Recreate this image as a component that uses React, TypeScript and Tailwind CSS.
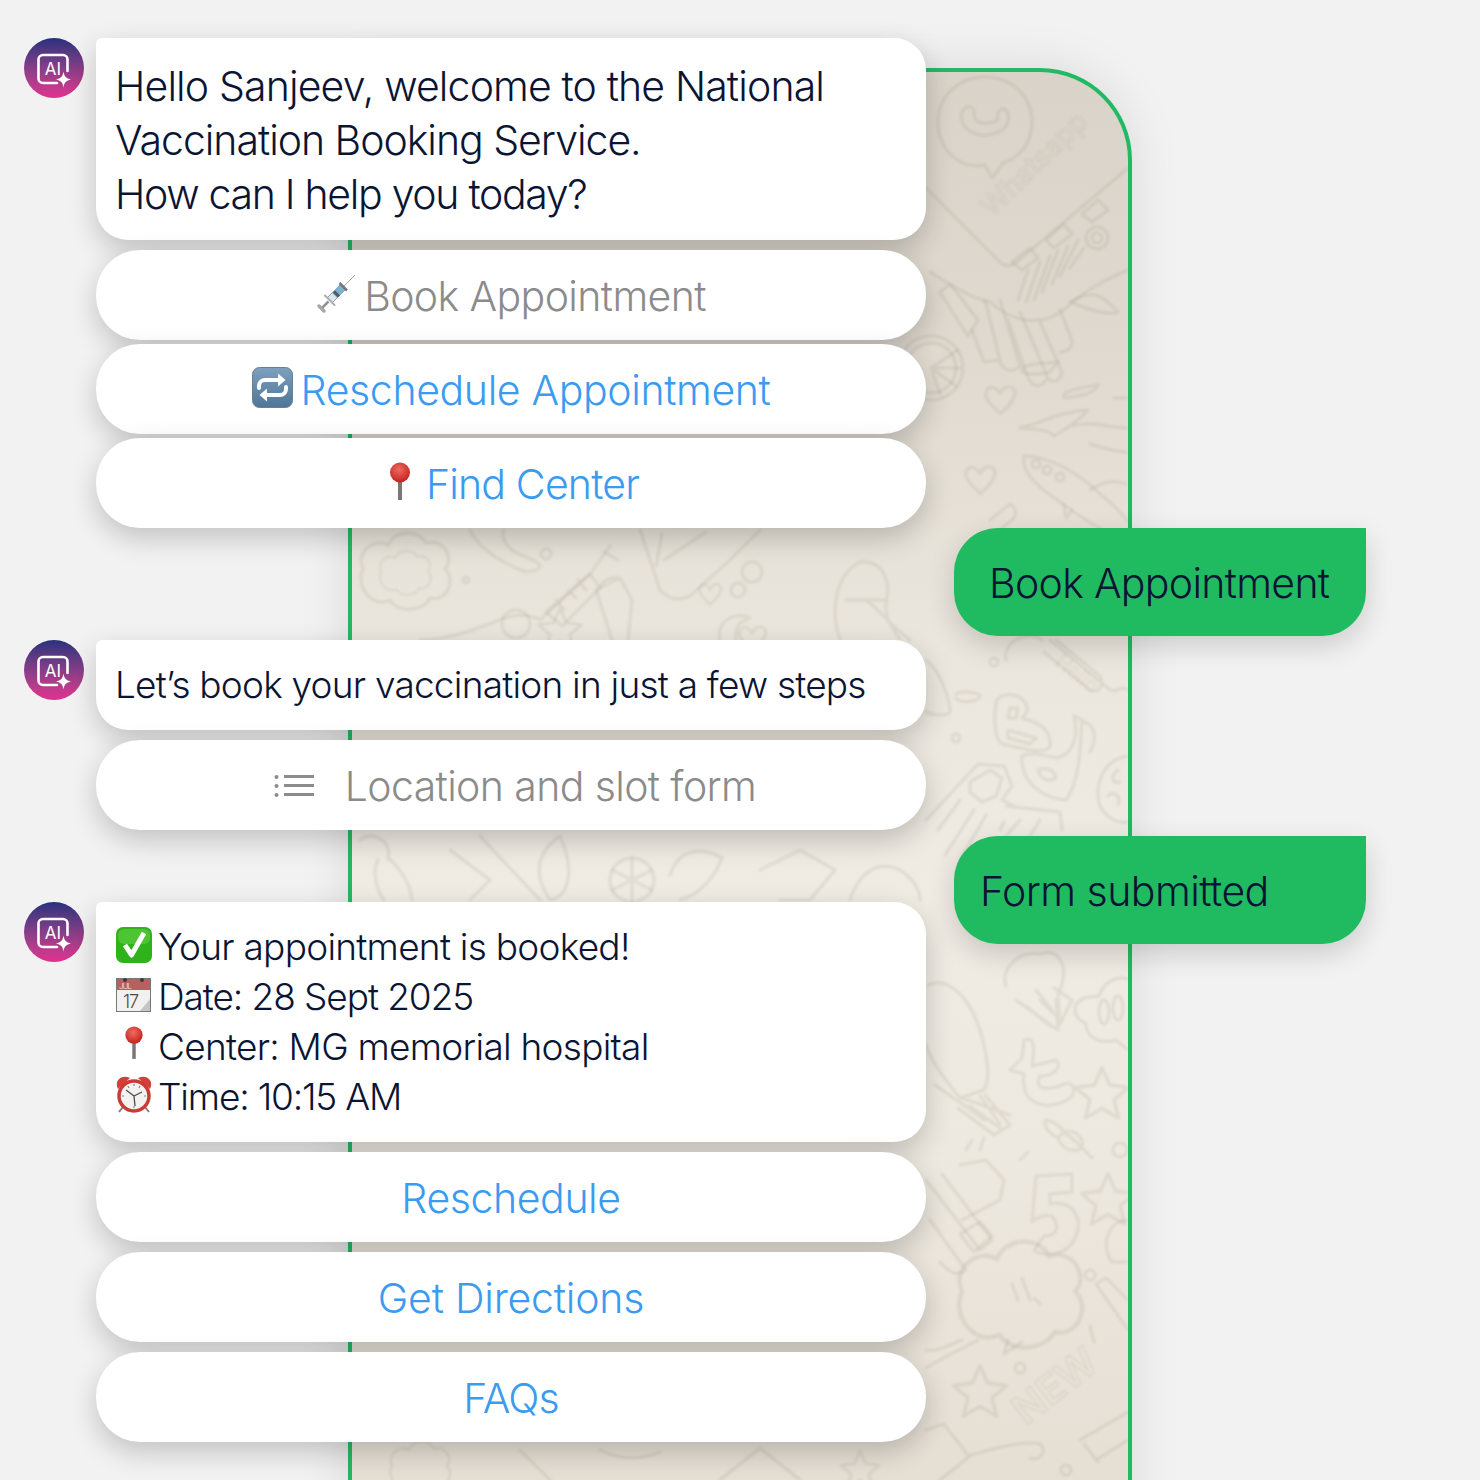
const font = { fontFamily: "Inter, 'Noto Sans', sans-serif" };

function AiAvatar() {
  return (
    <div className="w-[60px] h-[60px] shrink-0 rounded-full bg-gradient-to-b from-[#28307c] to-[#e32f8f] flex items-center justify-center">
      <svg width="60" height="60" viewBox="0 0 60 60" fill="none">
        <path d="M33 45H19a4.500 4.500 0 0 1-4.500-4.500V21.500A4.500 4.500 0 0 1 19 17h20a4.500 4.500 0 0 1 4.500 4.500V33" stroke="#fff" strokeWidth="2.600" strokeLinecap="round" />
        <text x="29" y="37" textAnchor="middle" fontSize="17" fontWeight="400" fill="#fff" fontFamily="Inter, sans-serif">AI</text>
        <path d="M39.500 33.500c.8 5 2.500 7 7.500 8-5 1-6.700 3-7.500 8-.8-5-2.500-7-7.500-8 5-1 6.700-3 7.500-8Z" fill="#fff" />
      </svg>
    </div>
  );
}

function Syringe() {
  return (
    <svg className="-translate-y-[3px]" width="40" height="40" viewBox="0 0 40 40" fill="none">
      <path d="M27 13 39 1" stroke="#8f8f8f" strokeWidth="0.800" />
      <path d="M11 24 24 11l5 5-13 13Z" fill="#dfe6ea" stroke="#98a1a6" strokeWidth="1" />
      <path d="M16 19 24 11l5 5-8 8Z" fill="#7fb2d0" />
      <path d="M12.500 27.500 6 34" stroke="#8e9499" strokeWidth="2.500" />
      <path d="M3 32l5 5" stroke="#a2a8ac" strokeWidth="3.500" strokeLinecap="round" />
      <path d="M9 21.500 18.500 31" stroke="#a8aeb2" strokeWidth="2" strokeLinecap="round" />
      <path d="M23.500 9 31 16.500" stroke="#6f787f" strokeWidth="2.500" />
      <path d="M18 17.500 23 22.500" stroke="#4b5a66" strokeWidth="3" />
    </svg>
  );
}

function RepeatEmoji() {
  return (
    <svg className="-translate-y-1" width="41" height="41" viewBox="0 0 41 41" fill="none">
      <defs>
        <linearGradient id="repeatbg" x1="0" y1="0" x2="0" y2="1">
          <stop offset="0" stopColor="#7da0be" />
          <stop offset="1" stopColor="#4f7697" />
        </linearGradient>
      </defs>
      <rect x="0.500" y="0.500" width="40" height="40" rx="7" fill="url(#repeatbg)" stroke="#6c7f90" />
      <path d="M7 21v-2a6 6 0 0 1 6-6h13" stroke="#fff" strokeWidth="4" strokeLinecap="round" />
      <path d="M26 6.500 33.500 13 26 19.500Z" fill="#fff" />
      <path d="M34 20v2a6 6 0 0 1-6 6H15" stroke="#fff" strokeWidth="4" strokeLinecap="round" />
      <path d="M15 21.500 7.500 28 15 34.500Z" fill="#fff" />
    </svg>
  );
}

function Pin({ w = 30 }: { w?: number }) {
  return (
    <svg className="-translate-y-1" width={w} height={w * 1.300} viewBox="0 0 30 39" fill="none">
      <defs>
        <radialGradient id="pinball" cx="0.450" cy="0.350" r="0.650">
          <stop offset="0" stopColor="#ee6a5f" />
          <stop offset="1" stopColor="#c4221f" />
        </radialGradient>
      </defs>
      <rect x="13" y="18" width="4" height="20" fill="#7d7675" />
      <circle cx="15" cy="10.500" r="10" fill="url(#pinball)" />
    </svg>
  );
}

function ListIcon() {
  return (
    <svg className="-translate-y-px" width="40" height="24" viewBox="0 0 40 24" fill="#8b8b8b">
      <circle cx="2.500" cy="3" r="2" />
      <circle cx="2.500" cy="12" r="2" />
      <circle cx="2.500" cy="21" r="2" />
      <rect x="10" y="1" width="30" height="3" />
      <rect x="10" y="10" width="30" height="3" />
      <rect x="10" y="19" width="30" height="3" />
    </svg>
  );
}

function CheckEmoji() {
  return (
    <svg className="-translate-y-[2px]" width="36" height="36" viewBox="0 0 36 36" fill="none">
      <rect width="36" height="36" rx="7" fill="#2fb31a" />
      <rect x="2" y="2" width="32" height="15" rx="6" fill="#62d044" opacity="0.600" />
      <path d="M9 18 15.500 28 28 6" stroke="#fff" strokeWidth="5" strokeLinejoin="round" />
    </svg>
  );
}

function CalendarEmoji() {
  return (
    <svg className="-translate-y-[2px]" width="36" height="36" viewBox="0 0 36 36" fill="none">
      <rect x="0.500" y="1.500" width="34" height="33" fill="#f2f1f0" stroke="#77787c" />
      <rect x="1" y="2" width="33" height="11" fill="#b5615f" />
      <circle cx="9" cy="3" r="2" fill="#3b3b3f" />
      <circle cx="26" cy="3" r="2" fill="#3b3b3f" />
      <text x="3" y="12" fontSize="8" fill="#f5e4e4" fontFamily="Inter, sans-serif">JUL</text>
      <text x="7" y="31" fontSize="18" fill="#4a4a4e" fontFamily="Inter, sans-serif">17</text>
      <path d="M34 22 24 34h10Z" fill="#c5c5c8" />
    </svg>
  );
}

function AlarmEmoji() {
  return (
    <svg className="-translate-y-[3px]" width="36" height="38" viewBox="0 0 36 38" fill="none">
      <path d="M2 14C-2 6 5 -1 14 3Z" fill="#d2403a" />
      <path d="M34 14c4-8-3-15-12-11Z" fill="#d2403a" />
      <path d="M7 32 3 37M29 32l4 5" stroke="#8a7a7a" strokeWidth="2" />
      <circle cx="18" cy="21" r="15" fill="#f4f2f0" stroke="#cc3a36" strokeWidth="3.500" />
      <path d="M18 9v2M18 31v2M6 21h2M28 21h2M12 11l1 2M24 11l-1 2" stroke="#888" strokeWidth="1.200" />
      <path d="M18 21 10 15M18 21l8-4M18 21l1 10" stroke="#4b4b4b" strokeWidth="1.300" />
    </svg>
  );
}

function Chip({ className, children }: { className?: string; children: React.ReactNode }) {
  return (
    <div className={`relative h-[90px] w-[830px] ml-[72px] pt-1 rounded-[44px] bg-white shadow-[0_10px_28px_rgba(0,0,0,0.2)] flex items-center justify-center text-[41px] font-[350] ${className ?? ""}`}>
      {children}
    </div>
  );
}

function Bubble({ className, children }: { className?: string; children: React.ReactNode }) {
  return (
    <div className="relative flex gap-3">
      <AiAvatar />
      <div className={`w-[830px] bg-white rounded-[32px] rounded-tl-[6px] shadow-[0_10px_28px_rgba(0,0,0,0.2)] font-[350] text-[#0b1533] ${className ?? ""}`}>
        {children}
      </div>
    </div>
  );
}

function Sent({ className, children }: { className?: string; children: React.ReactNode }) {
  return (
    <div className={`relative h-[108px] w-[412px] pt-1 bg-[#20bb60] rounded-[44px] rounded-tr-none shadow-[0_10px_28px_rgba(0,0,0,0.16)] flex items-center text-[41px] font-[350] text-[#0b1533] ${className ?? ""}`}>
      {children}
    </div>
  );
}

const HEART = "M0 6C-4 -4 -16 -2 -14 8C-12 16 -4 20 0 26C6 20 14 14 15 6C16 -3 4 -4 0 6Z";
const STAR = "M0 -24L7 -8 24 -6 11 5 15 22 0 13 -15 22 -11 5 -24 -6 -7 -8Z";
const CLOUD = "M-40 -6C-48 -24 -26 -36 -16 -28C-10 -44 14 -44 20 -30C36 -36 48 -16 38 -6C50 6 38 26 24 22C16 36 -8 36 -14 24C-30 32 -48 12 -40 -6Z";

function Doodles() {
  return (
    <svg className="absolute left-0 top-0 blur-[0.8px]" width="776" height="1420" viewBox="352 72 776 1420" fill="none" stroke="#8a7f6c" strokeOpacity="0.14" strokeWidth="3" strokeLinecap="round" strokeLinejoin="round">
      {/* whatsapp bubble and wordmark */}
      <path d="M992 178 985 165C960 170 938 150 938 122C938 95 960 77 985 77C1012 77 1032 97 1032 122C1032 145 1018 158 1003 163Z" />
      <path d="M962 112C958 128 975 138 992 134C1008 131 1012 118 1006 110C1000 106 996 114 998 120C988 126 974 124 974 114C976 106 966 104 962 112Z" />
      <text x="992" y="218" transform="rotate(-44 992 218)" fontSize="28" fontFamily="Inter, sans-serif" fontWeight="500" stroke="#8a7f6c" strokeWidth="1" fill="none">Whatsapp</text>
      {/* phone */}
      <path d="M926 188 1000 262C1006 268 1012 266 1018 261L1128 168" />
      <path d="M1012 262 1030 248 1038 258 1022 270ZM1046 240 1064 224 1072 234 1054 248ZM1082 214 1098 200 1108 210 1092 222Z" />
      <circle cx="1097" cy="238" r="11" />
      <circle cx="1097" cy="238" r="5" />
      <path d="M1018 300 1028 270M1026 302 1040 262M1034 300 1050 256M1042 292 1058 250M1052 284 1068 246M1060 276 1078 240M1070 268 1084 248" />
      {/* wing */}
      <path d="M930 272C950 285 975 300 990 302C1010 320 1040 330 1066 308C1085 290 1105 280 1128 270" />
      <path d="M985 300 1000 360 984 362 972 330M1000 300 1020 366C1012 374 1004 370 1000 362M1020 312 1048 378C1040 390 1032 386 1028 378L1008 320M1040 322 1062 372C1060 384 1050 382 1048 378M1060 310 1072 340C1072 350 1066 352 1060 352" />
      <path d="M950 284 940 292 968 336 978 320ZM1070 302C1090 310 1110 316 1118 312 1100 292 1090 290 1070 302Z" />
      {/* wheel */}
      <circle cx="931" cy="368" r="32" />
      <circle cx="931" cy="368" r="25" />
      <path d="M931 368 958 350M931 368 960 368M931 368 956 386M931 368 940 394" />
      <path transform="translate(1000 388)" d={HEART} />
      <path transform="translate(980 468)" d={HEART} />
      <path d="M1022 368C1034 362 1046 364 1058 362L1050 372C1040 374 1032 376 1022 372ZM1064 394C1076 386 1090 388 1098 384 1096 394 1080 396 1064 398ZM1020 428C1040 424 1056 412 1088 410 1076 424 1060 432 1054 436 1048 428 1030 430 1020 428ZM1070 426C1090 420 1110 428 1128 428M1090 444C1105 448 1115 452 1128 452M1114 398 1128 398" />
      {/* plane */}
      <path d="M1024 456C1050 456 1080 474 1100 494C1115 506 1124 516 1128 522M1024 456C1020 470 1036 486 1060 502 1080 516 1090 524 1100 528" />
      <circle cx="1036" cy="464" r="4" />
      <circle cx="1047" cy="470" r="4" />
      <circle cx="1060" cy="477" r="4" />
      <path d="M1064 504 1066 518 1072 510M1090 490C1100 484 1110 478 1126 484" />
      <path d="M990 520 1010 504C1016 508 1018 514 1012 520L1000 530" />
      {/* below first group */}
      <path transform="translate(405 575) scale(1.050)" d={CLOUD} />
      <path transform="translate(405 575) scale(0.600)" d={CLOUD} />
      <path d="M470 530C480 552 510 566 526 572 542 570 548 566 524 556 510 552 500 540 504 530" />
      <circle cx="546" cy="554" r="5" />
      <circle cx="466" cy="580" r="3" />
      <path d="M610 546 590 574 540 620C530 614 516 614 504 618 480 628 450 640 420 640" />
      <path d="M604 552 618 560M590 574 546 612 562 626 600 588ZM556 600 564 610M568 590 576 598M578 580 586 590" />
      <circle cx="516" cy="624" r="14" />
      <path transform="translate(560 630) scale(0.900)" d={STAR} />
      <path d="M596 590 620 578 632 600 628 640M596 590 612 640M600 586C606 578 618 574 622 582" />
      <path d="M640 530 660 590C672 602 680 600 690 596L730 560 760 530M662 534 656 566M664 560 706 532" />
      <path transform="translate(710 585) scale(0.750)" d={HEART} />
      <path transform="translate(752 628) scale(0.900)" d={HEART} />
      <path d="M720 640C716 620 735 612 750 618M736 640C734 628 740 622 746 620" />
      <circle cx="752" cy="572" r="10" />
      <circle cx="738" cy="590" r="7" />
      <path d="M840 640C830 610 835 575 860 562 882 560 892 580 886 604 884 620 896 632 900 640M866 600C880 610 890 625 910 640M846 600 886 600" />
      {/* between chips and sent */}
      <path d="M1006 660C1002 640 1030 630 1042 640M1050 640 1108 688C1115 696 1120 684 1128 690M1044 652 1090 690C1100 694 1104 684 1100 676L1056 640" />
      <text x="1054" y="664" transform="rotate(38 1054 664)" fontSize="20" fontFamily="Inter, sans-serif" stroke="#8a7f6c" strokeWidth="0.800" fill="none">Hello</text>
      <path d="M996 702C1000 692 1020 692 1026 704 1030 712 1024 716 1022 718 1036 722 1052 728 1050 746 1046 756 1020 748 1002 744 994 740 994 716 996 702Z" />
      <path d="M1010 708 1018 708 1016 718 1008 718ZM1008 730 1036 738 1030 744 1008 738Z" />
      <circle cx="994" cy="662" r="4" />
      <circle cx="956" cy="738" r="4" />
      <path d="M926 660C940 670 950 700 950 712 948 716 936 716 926 712M956 694C960 690 978 692 980 696 978 702 960 704 956 698" />
      <path d="M1074 716C1080 740 1070 756 1056 758 1040 754 1030 752 1022 756 1020 780 1040 798 1066 800 1080 780 1080 750 1082 720ZM1084 722C1094 724 1098 738 1090 752" />
      <path d="M1038 770C1046 766 1054 770 1056 778 1050 782 1040 780 1038 770Z" />
      <path d="M1128 756C1100 760 1094 790 1100 806 1108 820 1120 824 1128 822M1118 770C1110 776 1112 784 1120 782M1108 796C1112 790 1122 796 1118 804" />
      <path d="M926 820 978 764 1004 766 1012 786 1002 800 1014 806M970 782 990 770 1002 778 996 796 982 802 970 792ZM960 800 938 830M974 810 945 855M986 815 960 860M1006 806 1060 812 1062 830M1004 822 1000 830M1020 820 1006 836M1040 820 1030 836" />
      {/* second gap */}
      <path d="M360 840C372 830 392 840 388 858 396 864 410 880 412 900M378 860C372 870 376 890 384 900" />
      <path d="M450 850 490 880 470 900M480 836 540 900M560 836C540 850 530 870 550 900 570 896 575 870 560 836Z" />
      <path d="M670 875C680 845 706 848 722 858 716 875 700 895 680 900M760 870 800 850 835 870 810 900 780 900" />
      <path d="M850 900C860 870 880 860 900 870 915 880 920 890 920 900" />
      <circle cx="632" cy="880" r="22" />
      <path d="M632 858V900M612 870 652 890M652 870 612 890" />
      {/* lower right */}
      <path d="M1006 986C1000 968 1020 950 1040 954 1062 946 1070 972 1058 994L1060 1024 1072 1000 1054 988M1016 1000 1058 1030 1056 1000M1026 1006 1050 1026M1036 990 1052 1010M1060 1020 1040 1000" />
      <path d="M928 985C950 975 975 1000 985 1050 988 1066 990 1080 984 1090L960 1098C945 1080 930 1060 926 1045M962 1098 1010 1115M935 1085 985 1120M985 1095 1010 1125 994 1135 958 1108M970 1106 1000 1128M980 1096 1000 1124" />
      <path d="M1076 1004C1086 992 1098 1000 1100 994 1106 976 1128 976 1128 980M1076 1004C1072 1016 1080 1020 1086 1024 1086 1040 1104 1044 1116 1040L1128 1050" />
      <ellipse cx="1104" cy="1012" rx="5" ry="12" />
      <ellipse cx="1118" cy="1008" rx="5" ry="12" />
      <path d="M1010 1070 1022 1058 1024 1040C1036 1034 1034 1054 1032 1066L1056 1060C1062 1066 1056 1076 1040 1076 1034 1090 1046 1090 1060 1086 1072 1078 1078 1090 1070 1098 1052 1110 1034 1106 1026 1094 1022 1084 1024 1078 1024 1074Z" />
      <path transform="translate(1102 1094) scale(1.100)" d={STAR} />
      <path d="M1046 1120C1056 1122 1064 1130 1066 1134 1076 1140 1086 1152 1092 1158M1046 1120C1042 1126 1050 1134 1058 1138M1058 1138C1062 1130 1076 1128 1082 1140 1084 1148 1078 1152 1072 1150 1066 1150 1060 1144 1058 1138Z" />
      <circle cx="1120" cy="1150" r="7" />
      <path d="M960 1165 986 1160 1004 1180 1000 1200 962 1220M966 1150 972 1140M980 1150 984 1138M1020 1160 1028 1152" />
      <path d="M1036 1176 1072 1174 1072 1192 1050 1194 1050 1204C1072 1200 1080 1216 1078 1230 1070 1260 1040 1256 1034 1250L1044 1236C1058 1236 1060 1226 1052 1216 1044 1214 1036 1218 1032 1222Z" />
      <path transform="translate(1108 1200) scale(1.100)" d={STAR} />
      <path d="M926 1180 980 1250 992 1240 942 1174M930 1220 966 1270C958 1276 950 1274 940 1262" />
      <path d="M960 1234 980 1222 992 1236 974 1252ZM1130 1220C1104 1220 1102 1250 1112 1262L1128 1262" />
      {/* speech cloud, star, NEW */}
      <path transform="translate(1020 1300) scale(1.450)" d={CLOUD} />
      <path d="M1008 1340 1004 1354 1022 1342" />
      <path d="M1012 1284 1018 1300M1022 1278 1030 1300M1034 1298 1040 1304" />
      <circle cx="1090" cy="1275" r="5" />
      <path d="M1096 1284 1128 1330M1096 1284 1106 1278 1128 1300M1090 1326 1094 1342" />
      <path transform="translate(980 1392) scale(1.100)" d={STAR} />
      <circle cx="1020" cy="1368" r="5" />
      <text x="1026" y="1426" transform="rotate(-38 1026 1426)" fontSize="40" fontFamily="Inter, sans-serif" fontWeight="600" stroke="#8a7f6c" strokeWidth="1.200" fill="none">NEW</text>
      <path d="M1080 1440 1128 1412M1096 1460 1128 1440M1084 1444 1098 1462" />
      <path d="M926 1368C938 1360 960 1350 978 1340M926 1350C940 1352 950 1344 962 1340M926 1430 944 1424C958 1444 964 1448 968 1456 990 1450 1020 1440 1040 1444 1048 1450 1040 1462 1030 1458M970 1456 940 1480" />
      <circle cx="1066" cy="1470" r="5" />
      {/* bottom strip */}
      <path transform="translate(420 1470) scale(0.700)" d={CLOUD} />
      <path d="M520 1450 560 1490M600 1450C620 1460 640 1460 660 1452M720 1480 760 1448 800 1480" />
      <path transform="translate(860 1470) scale(0.800)" d={STAR} />
    </svg>
  );
}

export default function App() {
  return (
    <div className="relative w-[1480px] h-[1480px] overflow-hidden bg-[#f2f2f3]" style={font}>
      <div className="absolute left-[348px] top-[68px] w-[784px] h-[1500px] overflow-hidden rounded-tr-[92px] border-l-4 border-r-4 border-t-4 border-[#22b963] bg-[linear-gradient(180deg,#d9d3c9_0%,#dfd9cf_18%,#ebe6dd_38%,#f0ebe3_56%,#eee9e0_72%,#e8e2d8_86%,#e2dcd1_100%)] shadow-[0_0_50px_rgba(0,0,0,0.1)]">
        <Doodles />
      </div>

      <div className="relative flex items-start">
        <div className="flex flex-col pl-6 pt-[38px]">
          <Bubble className="h-[202px] pt-[21px] pl-[19px] text-[41px] leading-[54px]">
            <div className="tracking-[-0.021em]">Hello Sanjeev, welcome to the National</div>
            <div className="tracking-[-0.025em]">Vaccination Booking Service.</div>
            <div className="tracking-[-0.032em]">How can I help you today?</div>
          </Bubble>
          <Chip className="mt-[10px] text-[#8b8b8b] gap-2 tracking-[-0.015em]">
            <Syringe />
            Book Appointment
          </Chip>
          <Chip className="mt-1 text-[#3a9bf0] gap-2 tracking-[-0.009em]">
            <RepeatEmoji />
            Reschedule Appointment
          </Chip>
          <Chip className="mt-1 pl-[2px] text-[#3a9bf0] gap-[11px] tracking-[-0.02em]">
            <Pin />
            Find Center
          </Chip>

          <div className="mt-[112px]">
            <Bubble className="h-[90px] pl-[19px] flex items-center text-[37px] tracking-[-0.021em]">
              Let’s book your vaccination in just a few steps
            </Bubble>
          </div>
          <Chip className="mt-[10px] pl-2 text-[#8b8b8b] gap-[31px] tracking-[-0.015em]">
            <ListIcon />
            Location and slot form
          </Chip>

          <div className="mt-[72px]">
            <Bubble className="h-[240px] pt-5 pl-5 text-[37px] leading-[50px]">
              <div className="flex items-center gap-[6px] tracking-[-0.02em]">
                <CheckEmoji />
                Your appointment is booked!
              </div>
              <div className="flex items-center gap-[6px] tracking-[-0.029em]">
                <CalendarEmoji />
                Date: 28 Sept 2025
              </div>
              <div className="flex items-center gap-[6px] tracking-[-0.02em]">
                <span className="w-9 flex justify-center">
                  <Pin w={26} />
                </span>
                Center: MG memorial hospital
              </div>
              <div className="flex items-center gap-[6px] tracking-[-0.032em]">
                <AlarmEmoji />
                Time: 10:15 AM
              </div>
            </Bubble>
          </div>
          <Chip className="mt-[10px] text-[#3a9bf0] tracking-[-0.01em]">Reschedule</Chip>
          <Chip className="mt-[10px] text-[#3a9bf0] tracking-[-0.005em]">Get Directions</Chip>
          <Chip className="mt-[10px] text-[#3a9bf0] tracking-[-0.022em]">FAQs</Chip>
        </div>

        <div className="flex flex-col gap-[200px] pl-7 pt-[528px]">
          <Sent className="pl-[35px] tracking-[-0.017em]">Book Appointment</Sent>
          <Sent className="pl-[26px] tracking-[-0.013em]">Form submitted</Sent>
        </div>
      </div>
    </div>
  );
}
